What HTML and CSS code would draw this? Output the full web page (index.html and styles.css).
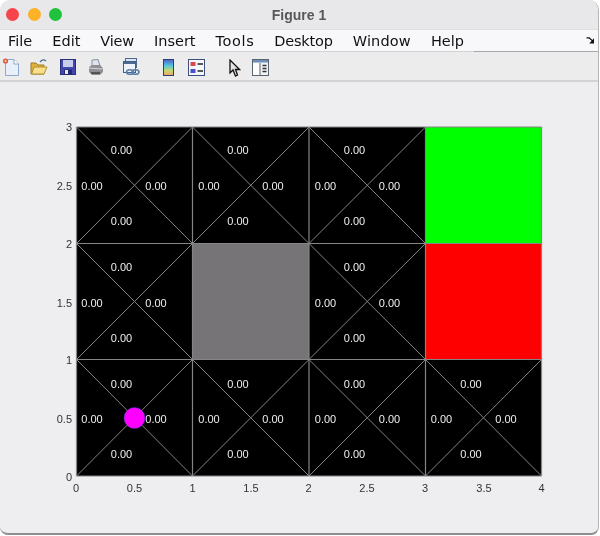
FILE: index.html
```html
<!DOCTYPE html>
<html lang="en">
<head>
  <meta charset="UTF-8">
  <title>Figure 1</title>
  <link rel="stylesheet" href="styles.css">
</head>
<body>
  <div class="window">
    <div class="titlebar">
      <div class="lights">
        <span class="light red"></span>
        <span class="light yellow"></span>
        <span class="light green"></span>
      </div>
      <div class="title">Figure 1</div>
    </div>

    <div class="menubar">
      <span class="menu-item">File</span>
      <span class="menu-item">Edit</span>
      <span class="menu-item tight">View</span>
      <span class="menu-item">Insert</span>
      <span class="menu-item wide">Tools</span>
      <span class="menu-item tight">Desktop</span>
      <span class="menu-item mid">Window</span>
      <span class="menu-item">Help</span>
      <svg class="dock-arrow" width="9" height="7" viewBox="0 0 10 8">
        <path d="M0.5 1 L3 1 M3 0.5 L8 5" stroke="#111" stroke-width="1.4" fill="none"/>
        <path d="M9 1.5 L9 7.5 L3.5 7.5 Z" fill="#111"/>
      </svg>
    </div>

    <div class="toolbar">
      <!-- new -->
      <svg class="tool t-new" width="18" height="20" viewBox="0 0 18 20">
        <path d="M3.5 2.5 H12 L16.5 7 V18.5 H3.5 Z" fill="#e6effa" stroke="#8fa9cc"/>
        <path d="M12 2.5 V7 H16.5" fill="#fff" stroke="#8fa9cc"/>
        <circle cx="3.5" cy="4" r="2.6" fill="#e2574a"/>
        <circle cx="3.5" cy="4" r="1.1" fill="#f9e08b"/>
      </svg>
      <!-- open -->
      <svg class="tool t-open" width="18" height="18" viewBox="0 0 18 18">
        <path d="M10 4 Q13 0.5 16 3" fill="none" stroke="#4b6c96" stroke-width="1.2"/>
        <path d="M1 5 H6 L8 7 H14 V16 H1 Z" fill="#e0b23c" stroke="#9a7a22"/>
        <path d="M1.5 16 L4 9 H17 L14 16 Z" fill="#f8e08a" stroke="#b08f30"/>
      </svg>
      <!-- save -->
      <svg class="tool t-save" width="16" height="16" viewBox="0 0 16 16">
        <rect x="0.5" y="0.5" width="15" height="15" fill="#4347ab" stroke="#2a2e7c"/>
        <rect x="3" y="1" width="10" height="7" fill="#c9cdec"/>
        <rect x="4" y="10.5" width="8" height="5" fill="#23276e"/>
        <rect x="5" y="11" width="3" height="4" fill="#e8e8ee"/>
      </svg>
      <!-- print -->
      <svg class="tool t-print" width="16" height="17" viewBox="0 0 16 17">
        <path d="M4 1 L10 0.5 L12 7 H4 Z" fill="#dfe4ec" stroke="#8a929c"/>
        <path d="M1 8 L4 6 H12 L15 9 V13 L12 16 H4 L1 13 Z" fill="#8d8f92"/>
        <path d="M1 9 L13 10 L15 9" fill="none" stroke="#d6d6d6"/>
        <path d="M3 14 H12" stroke="#444" stroke-width="1.6"/>
      </svg>
      <!-- link -->
      <svg class="tool t-link" width="18" height="18" viewBox="0 0 18 18">
        <rect x="3.5" y="0.5" width="11" height="9" fill="#dce6f2" stroke="#4c6a92"/>
        <rect x="1.5" y="3.5" width="12" height="11" fill="#eef3f9" stroke="#3f5f8c"/>
        <rect x="2" y="4" width="11" height="2" fill="#4c6a92"/>
        <ellipse cx="8" cy="14" rx="3.5" ry="2.3" fill="none" stroke="#5c7ea8" stroke-width="1.6"/>
        <ellipse cx="13.5" cy="14" rx="3.5" ry="2.3" fill="none" stroke="#5c7ea8" stroke-width="1.6"/>
      </svg>
      <!-- colorbar -->
      <svg class="tool t-colorbar" width="11" height="17" viewBox="0 0 11 17">
        <defs>
          <linearGradient id="cbar" x1="0" y1="0" x2="0" y2="1">
            <stop offset="0" stop-color="#4a60d0"/>
            <stop offset="0.4" stop-color="#58c8d8"/>
            <stop offset="0.7" stop-color="#c8d868"/>
            <stop offset="1" stop-color="#f0a070"/>
          </linearGradient>
        </defs>
        <rect x="0.5" y="0.5" width="10" height="16" fill="url(#cbar)" stroke="#2f3d74"/>
      </svg>
      <!-- legend -->
      <svg class="tool t-legend" width="17" height="17" viewBox="0 0 17 17">
        <rect x="0.5" y="0.5" width="16" height="16" fill="#f4f6fa" stroke="#3d4f7c"/>
        <rect x="2.5" y="3" width="5" height="4" fill="#d9484c"/>
        <rect x="2.5" y="10" width="5" height="4" fill="#4850cc"/>
        <path d="M9.5 5 H15 M9.5 12 H15" stroke="#222" stroke-width="1.4"/>
      </svg>
      <!-- pointer -->
      <svg class="tool t-pointer" width="12" height="18" viewBox="0 0 12 18">
        <path d="M1 1 V14 L4 11 L6.5 17 L8.5 16 L6.5 10.5 H10.5 Z" fill="#e4e4e4" stroke="#111" stroke-width="1.3"/>
      </svg>
      <!-- plot browser -->
      <svg class="tool t-browser" width="17" height="17" viewBox="0 0 17 17">
        <rect x="0.5" y="0.5" width="16" height="16" fill="#f2f2f2" stroke="#5a6470"/>
        <rect x="1" y="1" width="15" height="2.5" fill="#6d8fb8"/>
        <rect x="1" y="4" width="6.5" height="12" fill="#fff"/>
        <path d="M8 4 V16" stroke="#5a6470"/>
        <path d="M10.5 6.5 H14.5 M10.5 9.5 H14.5 M10.5 12.5 H14.5" stroke="#333" stroke-width="1.6"/>
      </svg>
    </div>

    <div class="figure">
      <svg class="plot" width="598" height="450" viewBox="0 0 598 450">
        <g transform="translate(0,-82)">
          <!-- cells -->
          <rect x="76.5" y="127" width="465" height="349" fill="#000"/>
          <rect x="425.5" y="127" width="116" height="116.5" fill="#00ff00"/>
          <rect x="192.5" y="243.5" width="116.5" height="116" fill="#767476"/>
          <rect x="425.5" y="243.5" width="116" height="116" fill="#ff0000"/>

          <!-- diagonals -->
          <g class="grid-lines">
            <path d="M76.5 127 L192.5 243.5 M192.5 127 L76.5 243.5"/>
            <path d="M192.5 127 L309 243.5 M309 127 L192.5 243.5"/>
            <path d="M309 127 L425.5 243.5 M425.5 127 L309 243.5"/>
            <path d="M76.5 243.5 L192.5 359.5 M192.5 243.5 L76.5 359.5"/>
            <path d="M309 243.5 L425.5 359.5 M425.5 243.5 L309 359.5"/>
            <path d="M76.5 359.5 L192.5 476 M192.5 359.5 L76.5 476"/>
            <path d="M192.5 359.5 L309 476 M309 359.5 L192.5 476"/>
            <path d="M309 359.5 L425.5 476 M425.5 359.5 L309 476"/>
            <path d="M425.5 359.5 L541.5 476 M541.5 359.5 L425.5 476"/>
            <path class="edges" d="M76.5 127 H541.5 M76.5 243.5 H541.5 M76.5 359.5 H541.5 M76.5 476 H541.5"/>
            <path class="edges" d="M76.5 127 V476 M192.5 127 V476 M309 127 V476 M425.5 127 V476 M541.5 127 V476"/>
          </g>

          <!-- cell values -->
          <g class="values">
            <text x="121.5" y="154">0.00</text><text x="92" y="190">0.00</text><text x="156" y="190">0.00</text><text x="121.5" y="225">0.00</text>
            <text x="238" y="154">0.00</text><text x="209" y="190">0.00</text><text x="273" y="190">0.00</text><text x="238" y="225">0.00</text>
            <text x="354.5" y="154">0.00</text><text x="325.5" y="190">0.00</text><text x="389.5" y="190">0.00</text><text x="354.5" y="225">0.00</text>
            <text x="121.5" y="271">0.00</text><text x="92" y="307">0.00</text><text x="156" y="307">0.00</text><text x="121.5" y="342">0.00</text>
            <text x="354.5" y="271">0.00</text><text x="325.5" y="307">0.00</text><text x="389.5" y="307">0.00</text><text x="354.5" y="342">0.00</text>
            <text x="121.5" y="387.5">0.00</text><text x="92" y="423">0.00</text><text x="156" y="423">0.00</text><text x="121.5" y="458">0.00</text>
            <text x="238" y="387.5">0.00</text><text x="209" y="423">0.00</text><text x="273" y="423">0.00</text><text x="238" y="458">0.00</text>
            <text x="354.5" y="387.5">0.00</text><text x="325.5" y="423">0.00</text><text x="389.5" y="423">0.00</text><text x="354.5" y="458">0.00</text>
            <text x="471" y="387.5">0.00</text><text x="441.5" y="423">0.00</text><text x="506" y="423">0.00</text><text x="471" y="458">0.00</text>
          </g>

          <!-- agent -->
          <circle cx="134.5" cy="418" r="10.5" fill="#ff00ff" stroke="#3b3bd0" stroke-width="0.5"/>

          <!-- axis ticks -->
          <g class="ticks-y">
            <text x="72" y="131">3</text>
            <text x="72" y="190">2.5</text>
            <text x="72" y="248">2</text>
            <text x="72" y="307">1.5</text>
            <text x="72" y="364">1</text>
            <text x="72" y="423">0.5</text>
            <text x="72" y="481">0</text>
          </g>
          <g class="ticks-x">
            <text x="76" y="492">0</text>
            <text x="134.5" y="492">0.5</text>
            <text x="192.5" y="492">1</text>
            <text x="251" y="492">1.5</text>
            <text x="308.5" y="492">2</text>
            <text x="367" y="492">2.5</text>
            <text x="425" y="492">3</text>
            <text x="484" y="492">3.5</text>
            <text x="541.5" y="492">4</text>
          </g>
        </g>
      </svg>
    </div>
  </div>
</body>
</html>
```

FILE: styles.css
```css
html, body {
  margin: 0;
  padding: 0;
  background: #fff;
}

.window {
  width: 599px;
  height: 535px;
  background: #eeedf0;
  border-radius: 10px 10px 8px 8px;
  border-bottom: 2px solid #8d8d8f;
  border-right: 1px solid #b5b5b8;
  overflow: hidden;
  box-sizing: border-box;
  display: flex;
  flex-direction: column;
  font-family: "DejaVu Sans", sans-serif;
}

.titlebar {
  height: 29px;
  flex: none;
  display: flex;
  align-items: center;
  position: relative;
  background: #e8e7ea;
}

.lights {
  display: flex;
  gap: 8.5px;
  padding-left: 6px;
  margin-top: -1px;
}

.light {
  width: 13px;
  height: 13px;
  border-radius: 50%;
}

.light.red { background: #f5454a; }
.light.yellow { background: #fcb127; }
.light.green { background: #1fc23c; }

.title {
  position: absolute;
  left: 0;
  right: 0;
  text-align: center;
  font-size: 14px;
  font-weight: bold;
  color: #58575a;
  font-family: "Liberation Sans", sans-serif;
  filter: blur(0.3px);
}

.menubar {
  height: 23px;
  flex: none;
  box-sizing: border-box;
  background: #f8f7fa;
  border-top: 1px solid #dededf;
  border-bottom: 1px solid #d2d2d4;
  display: flex;
  align-items: center;
  gap: 20px;
  padding-left: 8px;
  position: relative;
  font-size: 14.5px;
  color: #111;
}

.menubar::after {
  content: "";
  position: absolute;
  left: 474px;
  right: 0;
  bottom: -1px;
  height: 1px;
  background: #a9a9ad;
}

.menu-item { filter: blur(0.3px); }
.menu-item.tight { letter-spacing: -0.2px; }
.menu-item.mid { letter-spacing: 0.17px; }
.menu-item.wide { letter-spacing: 0.6px; }

.dock-arrow {
  position: absolute;
  right: 3px;
  top: 7px;
}

.toolbar {
  height: 30px;
  flex: none;
  box-sizing: border-box;
  background: #ececec;
  border-bottom: 2px solid #d3d3d5;
  display: flex;
  align-items: center;
  padding-left: 2px;
  padding-top: 2px;
}

.tool {
  flex: none;
  filter: blur(0.35px);
}
.t-new { margin-right: 10px; }
.t-open { margin-right: 12px; }
.t-save { margin-right: 12px; }
.t-print { margin-right: 18px; }
.t-link { margin-right: 23px; }
.t-colorbar { margin-right: 14px; }
.t-legend { margin-right: 24px; }
.t-pointer { margin-right: 11px; margin-top: 2px; }

.figure {
  flex: 1;
  min-height: 0;
}

.plot {
  display: block;
  font-family: "Liberation Sans", sans-serif;
  font-size: 11px;
}

.grid-lines path {
  fill: none;
  stroke: #858486;
  stroke-width: 1;
}

.grid-lines .edges {
  stroke-width: 1.2;
}

.values, .ticks-y, .ticks-x {
  filter: blur(0.3px);
}

.values text {
  fill: #eeeeee;
  text-anchor: middle;
}

.ticks-y text {
  fill: #333;
  text-anchor: end;
}

.ticks-x text {
  fill: #333;
  text-anchor: middle;
}
```
